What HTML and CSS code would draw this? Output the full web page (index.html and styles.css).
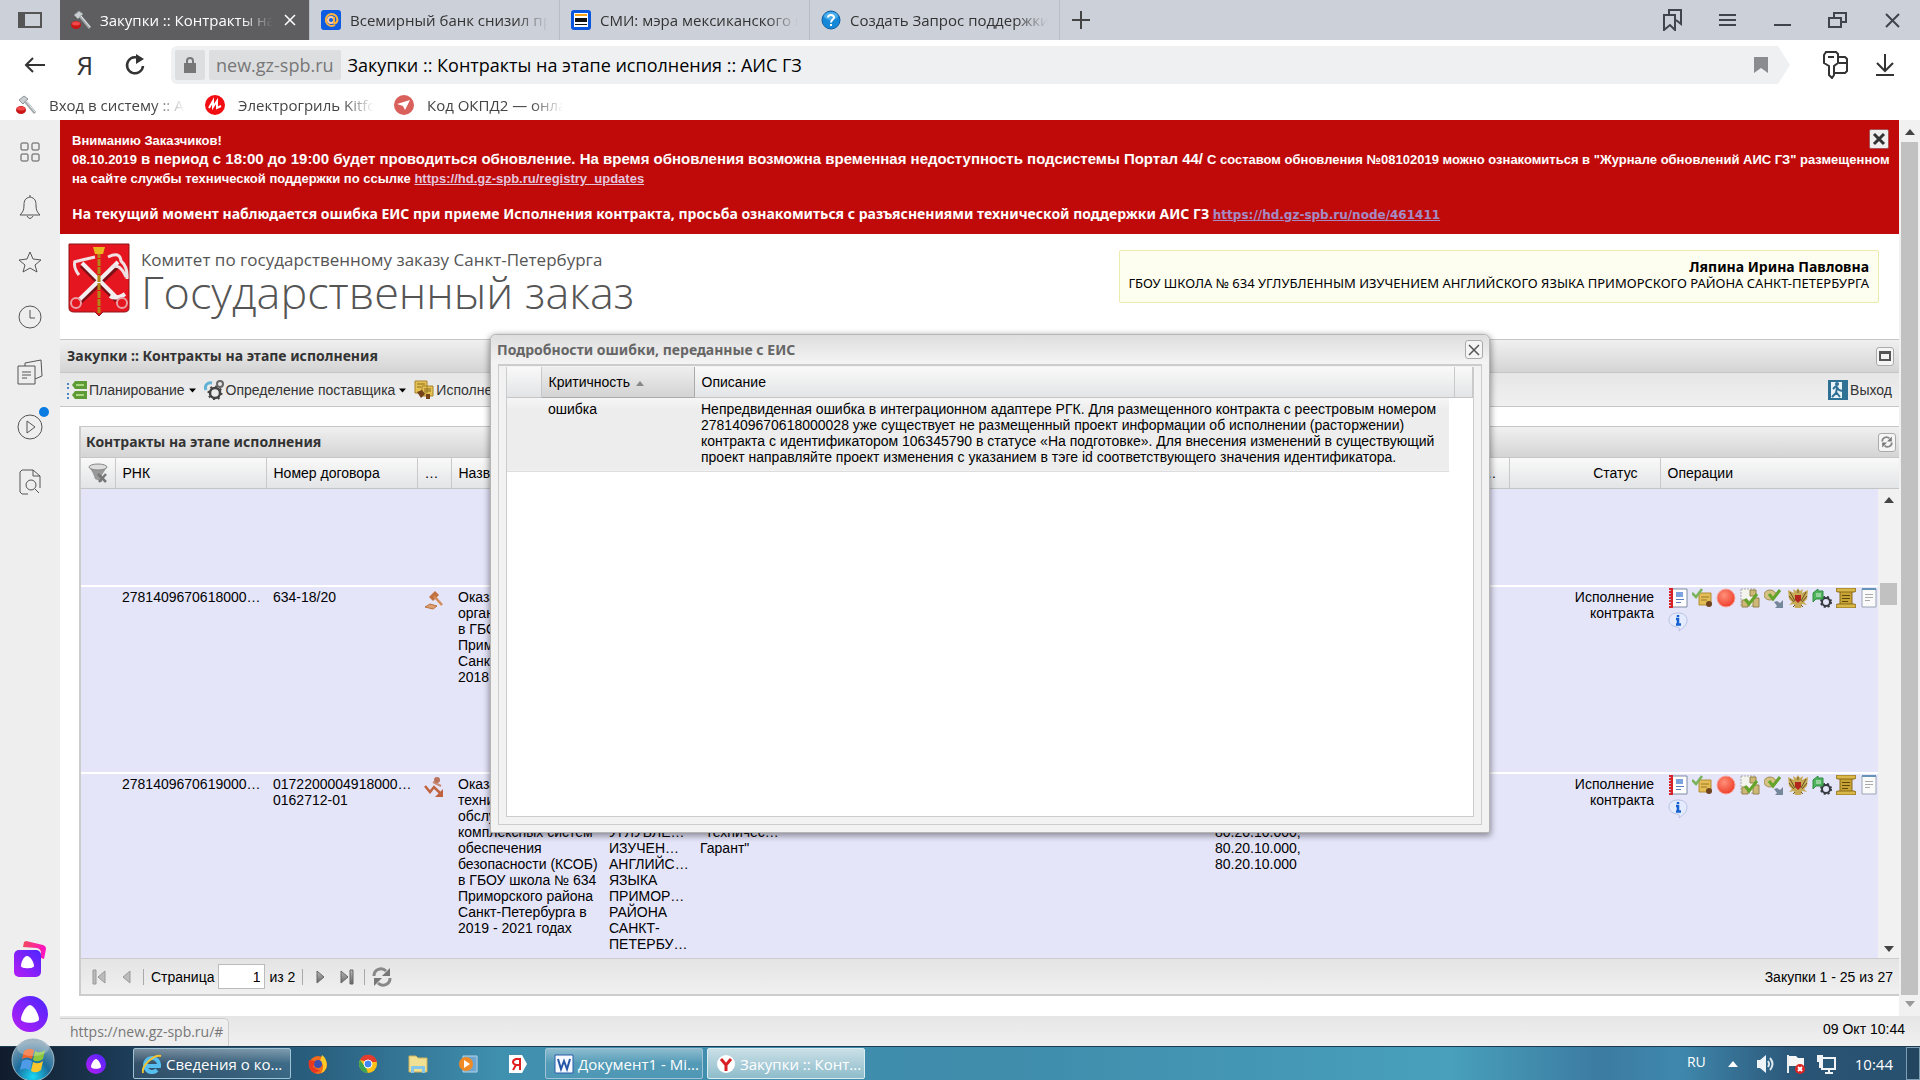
FILE: index.html
```html
<!DOCTYPE html>
<html lang="ru">
<head>
<meta charset="utf-8">
<title>Закупки :: Контракты на этапе исполнения :: АИС ГЗ</title>
<link rel="stylesheet" href="styles.css">
</head>
<body>
<svg class="defs" width="0" height="0" aria-hidden="true">
  <defs>
    <linearGradient id="violet" x1="1" y1="0" x2="0" y2="1"><stop offset="0" stop-color="#4a26ff"/><stop offset="1" stop-color="#b81df5"/></linearGradient>
    <linearGradient id="pink" x1="0" y1="0" x2="1" y2="0"><stop offset="0" stop-color="#f4485c"/><stop offset="1" stop-color="#ff10c8"/></linearGradient>
    <radialGradient id="orb" cx=".5" cy=".9" r=".9"><stop offset="0" stop-color="#19d8f5"/><stop offset=".45" stop-color="#1a6c9c"/><stop offset="1" stop-color="#8fa5b4"/></radialGradient>
    <radialGradient id="redball" cx=".4" cy=".35" r=".7"><stop offset="0" stop-color="#ff9078"/><stop offset="1" stop-color="#ee3a28"/></radialGradient>
    <linearGradient id="greyfade" x1="0" y1="0" x2="0" y2="1"><stop offset="0" stop-color="#bbb"/><stop offset="1" stop-color="#666"/></linearGradient>
  </defs>
  <symbol id="i-gavel" viewBox="0 0 20 20"><path d="M3 5 8 1l4 3-5 5z" fill="#c9ced2" stroke="#8e9396"/><path d="m9 6 10 12" stroke="#a3a8ab" stroke-width="3"/><path d="m10 6 9 11" stroke="#e8ebec"/><ellipse cx="5" cy="15" rx="5" ry="4" fill="#c91515"/><ellipse cx="5" cy="13.500" rx="4" ry="2" fill="#f14848"/></symbol>
  <symbol id="i-mail" viewBox="0 0 20 20"><rect width="20" height="20" rx="3" fill="#0c5be0"/><circle cx="10" cy="10" r="3" fill="none" stroke="#fca" stroke-width="2"/><path d="M13 7v5q0 2 2 1c3-3 1-9-5-9a6 6 0 1 0 4 11" fill="none" stroke="#fbb33c" stroke-width="2"/></symbol>
  <symbol id="i-news" viewBox="0 0 20 20"><rect width="20" height="20" rx="3" fill="#0a55dd"/><path fill="#fff" d="M3 3h14v14H3z"/><path fill="#f6a41c" d="M4 4h12v2H4z"/><path fill="#111" d="M4 8h12v4H4zM4 14h12v1H4z"/></symbol>
  <symbol id="i-help" viewBox="0 0 20 20"><circle cx="10" cy="10" r="9" fill="#1588d8" stroke="#0d5fa8"/><ellipse cx="10" cy="6" rx="7" ry="4" fill="#6dc6f5" opacity=".6"/><path d="M7 7.500c0-3.500 6-3.500 6 0 0 2-3 2-3 5M10 14v2" fill="none" stroke="#fff" stroke-width="2"/></symbol>
  <symbol id="i-close" viewBox="0 0 16 16"><path d="m3 3 10 10M13 3 3 13" stroke="currentColor" stroke-width="1.500" fill="none"/></symbol>
  <symbol id="i-closebold" viewBox="0 0 16 16"><path d="m3 3 10 10m0-10L3 13" stroke="currentColor" stroke-width="3" fill="none"/></symbol>
  <symbol id="i-alice" viewBox="0 0 36 36"><circle cx="18" cy="18" r="18" fill="url(#violet)"/><path d="M18 9c4 0 9 10 9 14 0 5-18 5-18 0 0-4 5-14 9-14z" fill="#fff"/></symbol>
  <symbol id="i-bullets" viewBox="0 0 20 20"><path fill="#4d87c7" d="M0 3h2v2H0zM0 7h2v2H0zM0 13h2v2H0zM0 17h2v2H0z"/><path fill="#5c9b35" d="M8 1h12v8H8L5 5zM8 11h12v8H8l-3-4z"/><path fill="#a9d67f" d="M9 4h8v2H9zM9 14h8v2H9z"/></symbol>
  <symbol id="i-gears" viewBox="0 0 20 20"><path d="M2 10C0 5 4 2 8 3" fill="none" stroke="#62b2d6" stroke-width="3"/><circle cx="11" cy="13" r="5" fill="none" stroke="#444" stroke-width="2.500"/><circle cx="11" cy="13" r="6.500" fill="none" stroke="#444" stroke-width="2" stroke-dasharray="2 3"/><circle cx="16" cy="4" r="3" fill="none" stroke="#666" stroke-width="2"/></symbol>
  <symbol id="i-cert" viewBox="0 0 20 20"><path fill="#e4c254" stroke="#a8842a" d="M1 1h12v12H1zM8 6h11v10H8z"/><path d="M3 4h8M3 7h4M10 9h7M10 11h7" stroke="#8d6a1c"/><path fill="#74431b" d="m3 12 5-2 3 4-4 4zM12 14h4v5h-4z"/></symbol>
  <symbol id="i-exit" viewBox="0 0 20 20"><path fill="#2f7095" d="M0 0h20v20H0z"/><path fill="#e9f3f8" d="M3 2h11v16H3z"/><path d="M8 6l-3 3M8 6l3 4 3 1M9 8l-1 5-4 4M8 12l4 5" fill="none" stroke="#2f7095" stroke-width="2"/><circle cx="9" cy="4" r="2" fill="#2f7095"/></symbol>
  <symbol id="i-funnel" viewBox="0 0 20 20"><path fill="#999" d="M1 4c2 3 4 6 5 9l1 3 7 3V12l5-8z"/><ellipse cx="10" cy="4" rx="9" ry="3" fill="#ddd" stroke="#888"/><path d="m10 11 8 8m0-8-7 8" stroke="#777" stroke-width="2.500"/></symbol>
  <symbol id="i-hammer" viewBox="0 0 20 20"><path fill="#c2703f" d="m5 7 6-6 4 4-6 6z"/><path d="m10 6 8 9" stroke="#d18a55" stroke-width="2.500"/><path fill="#dfa071" stroke="#b87040" d="m1 17 5-3 7 2-4 3z"/></symbol>
  <symbol id="i-drop" viewBox="0 0 20 20"><path d="m1 9 5 6 4-5 7 7" fill="none" stroke="#c0623d" stroke-width="2.500"/><path fill="#c0623d" d="M19 12v8h-8z"/><path d="m9 5 8 4" stroke="#c98a73" stroke-width="2"/><circle cx="13" cy="3" r="3" fill="#b9735c"/></symbol>
  <symbol id="i-book" viewBox="0 0 20 20"><path fill="#fff" stroke="#7c8ba0" d="M3 1h16v18H3z"/><path stroke="#d8232a" stroke-width="4" stroke-dasharray="2 1" d="M3 0v20"/><path fill="#d8232a" d="M3 0h2v20H3z"/><path fill="#7aa3e0" d="M8 4h7v5H8z"/><path stroke="#5a7fc0" d="M8 11.500h8M8 14.500h5"/></symbol>
  <symbol id="i-okcert" viewBox="0 0 20 20"><path fill="#e3bd55" stroke="#b18b33" d="M7 5h12v12H7z"/><path stroke="#9c7625" d="M9 9h8M9 12h6"/><path d="m0 5 4 4 6-8" fill="none" stroke="#7bb35b" stroke-width="2.500"/><circle cx="17" cy="16" r="3" fill="#70431f"/></symbol>
  <symbol id="i-stop" viewBox="0 0 20 20"><circle cx="10" cy="10" r="9" fill="url(#redball)" stroke="#f4a79c"/></symbol>
  <symbol id="i-coins" viewBox="0 0 20 20"><path fill="#f4f4ee" stroke="#aaa" stroke-dasharray="2 1" d="M1 1h14v17H1z"/><path fill="#cdb878" stroke="#94814a" d="M10 2h6v6h-6zM2 12h6v7H2zM13 10h6v9h-6z"/><path d="m5 11 4 5 8-10" fill="none" stroke="#65a42c" stroke-width="3"/></symbol>
  <symbol id="i-coinok" viewBox="0 0 20 20"><ellipse cx="6" cy="7" rx="6" ry="5" fill="#d5c181" stroke="#a08d53"/><path d="m5 6 4 5 7-9" fill="none" stroke="#65a42c" stroke-width="3"/><path fill="#75879a" d="M19 12v8h-8l2-2-3-4 3-1 3 2z"/></symbol>
  <symbol id="i-eagle" viewBox="0 0 20 20"><path fill="#c7aa55" d="m10 0 2 3 3-2-1 4 6-3-1 9-3 3 3 3-5-1-1 4h-6l-1-4-5 1 3-3-3-3-1-9 6 3-1-4 3 2z"/><path d="m2 4 5 9M18 4l-5 9M1 8l5 6M19 8l-5 6M10 2v3M7 17l-2 2M13 17l2 2" stroke="#6b5220"/><path fill="#b3261e" d="M7 7h6v5l-3 3-3-3z"/></symbol>
  <symbol id="i-proc" viewBox="0 0 20 20"><circle cx="14" cy="14" r="4" fill="none" stroke="#353b3e" stroke-width="2"/><circle cx="14" cy="14" r="5" fill="none" stroke="#353b3e" stroke-width="2" stroke-dasharray="2 2"/><path fill="#4fb25c" stroke="#2f8c40" d="M1 5 6 1v2h5v8H4l-3 3z"/><path stroke="#d5f2d8" d="M4 6h5M4 8h5"/></symbol>
  <symbol id="i-scroll" viewBox="0 0 20 20"><path fill="#c7a234" stroke="#8a6b16" d="M4 2h12v16H4z"/><rect width="20" height="4" rx="2" fill="#d9b748" stroke="#8a6b16"/><rect y="16" width="20" height="4" rx="2" fill="#d9b748" stroke="#8a6b16"/><path stroke="#5f490b" d="M6 7.500h8M6 10.500h8M6 13.500h6"/></symbol>
  <symbol id="i-page" viewBox="0 0 20 20"><path fill="#fafafa" stroke="#9aa5b4" d="M2 1h14v18H2z"/><path fill="#6492b8" d="M2 0h14v2H2z"/><path stroke="#aaa" d="M5 6.500h8M5 9.500h8M5 12.500h5"/></symbol>
  <symbol id="i-info" viewBox="0 0 20 20"><path fill="#e4ebff" stroke="#b9c3e2" d="M10 1c6 0 9 3 9 7 0 5-3 7-8 11 1-3 0-4-2-4-6-1-8-4-8-7 0-4 3-7 9-7z"/><path d="M10 3v2M8 7h2v5M8 12.500h5" stroke="#1561d1" stroke-width="2.500" fill="none"/></symbol>
  <symbol id="i-refresh" viewBox="0 0 20 20"><path d="M2 9a7 7 0 0 1 12-5M18 11a7 7 0 0 1-12 5" fill="none" stroke="#888" stroke-width="3"/><path fill="#777" d="M18 1v8h-8zM2 19v-8h8z"/></symbol>
  <symbol id="i-up" viewBox="0 0 10 6"><path fill="currentColor" d="M5 0l5 6H0z"/></symbol>
  <symbol id="i-down" viewBox="0 0 10 6"><path fill="currentColor" d="M0 0h10L5 6z"/></symbol>
</svg>

<header class="browser">
  <nav class="tabs" aria-label="Вкладки">
    <button class="tab-panel" aria-label="Панель"><svg width="24" height="16" viewBox="0 0 24 16"><path d="M1 1h22v14H1z" fill="none" stroke="#555" stroke-width="2"/><path fill="#555" d="M1 1h6v14H1z"/></svg></button>
    <button class="tab tab-active"><svg width="20" height="20"><use href="#i-gavel"/></svg><span class="tab-name">Закупки :: Контракты на этапе</span><svg width="16" height="16"><use href="#i-close"/></svg></button>
    <button class="tab"><svg width="20" height="20"><use href="#i-mail"/></svg><span class="tab-name">Всемирный банк снизил прогноз</span></button>
    <button class="tab"><svg width="20" height="20"><use href="#i-news"/></svg><span class="tab-name">СМИ: мэра мексиканского города</span></button>
    <button class="tab"><svg width="20" height="20"><use href="#i-help"/></svg><span class="tab-name">Создать Запрос поддержки</span></button>
    <button class="tab-add" aria-label="Новая вкладка"><svg width="18" height="18" viewBox="0 0 18 18"><path d="M9 0v18M0 9h18" stroke="#444" stroke-width="2"/></svg></button>
    <div class="window-tools">
      <button aria-label="Закладки"><svg width="22" height="22" viewBox="0 0 22 22"><path d="M2 6h11v15l-5-5-6 5zM7 6V1h12v14l-5-4" fill="none" stroke="#40444c" stroke-width="2"/></svg></button>
      <button aria-label="Меню"><svg width="22" height="22" viewBox="0 0 22 22"><path d="M2 6h17M2 11h17M2 16h17" stroke="#40444c" stroke-width="2"/></svg></button>
      <button aria-label="Свернуть"><svg width="22" height="22" viewBox="0 0 22 22"><path d="M2 16h17" stroke="#40444c" stroke-width="2"/></svg></button>
      <button aria-label="Окно"><svg width="22" height="22" viewBox="0 0 22 22"><path d="M2 9h12v9H2zM7 8V4h12v9h-4" fill="none" stroke="#40444c" stroke-width="2"/></svg></button>
      <button aria-label="Закрыть"><svg width="22" height="22" viewBox="0 0 22 22"><path d="m4 5 13 13M17 5 4 18" stroke="#40444c" stroke-width="2"/></svg></button>
    </div>
  </nav>
  <div class="address">
    <button aria-label="Назад"><svg width="22" height="22" viewBox="0 0 22 22"><path d="M21 11H2m7-7-7 7 7 7" fill="none" stroke="#333" stroke-width="2"/></svg></button>
    <button class="ya">Я</button>
    <button aria-label="Обновить"><svg width="22" height="22" viewBox="0 0 22 22"><path d="M17 6a8 8 0 1 0 2 6" fill="none" stroke="#333" stroke-width="2.500"/><path fill="#333" d="M12 0l8 5-8 5z"/></svg></button>
    <div class="field">
      <span class="lock"><svg width="12" height="18" viewBox="0 0 12 18"><path d="M3 9V5a3 3 0 0 1 6 0v4" fill="none" stroke="#777" stroke-width="2"/><path fill="#777" d="M0 7h12v10H0z"/></svg></span>
      <span class="host">new.gz-spb.ru</span>
      <input class="url" type="text" aria-label="Адрес" value="Закупки :: Контракты на этапе исполнения :: АИС ГЗ">
      <svg width="14" height="16" viewBox="0 0 14 16"><path fill="#8b8c90" d="M0 0h14v16l-7-5-7 5z"/></svg>
    </div>
    <button class="keys" aria-label="Пароли"><svg width="28" height="28" viewBox="0 0 28 28"><path d="M5 1h10l2 2v9l-4 3v9l-2 3-3-3v-9l-5-3V4zM7 6h6M18 6h6l2 2v12l-2 2H14M18 12h8" fill="none" stroke="#333" stroke-width="2"/></svg></button>
    <button aria-label="Загрузки"><svg width="20" height="24" viewBox="0 0 20 24"><path d="M10 1v17m-8-8 8 8 8-8M1 22h18" fill="none" stroke="#333" stroke-width="2"/></svg></button>
  </div>
  <nav class="marks" aria-label="Закладки">
    <a href="#"><svg width="20" height="20"><use href="#i-gavel"/></svg><span>Вход в систему :: АИС</span></a>
    <a href="#"><svg width="20" height="20" viewBox="0 0 20 20"><circle cx="10" cy="10" r="10" fill="#f20d12"/><path d="m4 13 4-7v6l4-6v7l4-2" fill="none" stroke="#fff" stroke-width="2"/></svg><span>Электрогриль Kitfort</span></a>
    <a href="#"><svg width="20" height="20" viewBox="0 0 20 20"><circle cx="10" cy="10" r="10" fill="#d9605b"/><path fill="#fff" d="m3 9 13-4-5 10-2-4z"/></svg><span>Код ОКПД2 — онлайн</span></a>
  </nav>
</header>

<div class="middle">
  <aside class="side">
    <button aria-label="Табло"><svg width="20" height="20" viewBox="0 0 20 20"><g fill="none" stroke="#555"><rect x="1" y="1" width="7" height="7" rx="1"/><rect x="12" y="1" width="7" height="7" rx="1"/><rect x="1" y="12" width="7" height="7" rx="1"/><rect x="12" y="12" width="7" height="7" rx="1"/></g></svg></button>
    <button aria-label="Уведомления"><svg width="22" height="26" viewBox="0 0 22 26"><path d="M11 1v2c-5 1-6 4-6 8 0 5-1 7-4 10h20c-3-3-4-5-4-10 0-4-1-7-6-8M8 22q3 5 6 0" fill="none" stroke="#555"/></svg></button>
    <button aria-label="Избранное"><svg width="24" height="22" viewBox="0 0 24 22"><path d="m12 1 3 7 8 1-6 5 2 7-7-4-7 4 2-7-6-5 8-1z" fill="none" stroke="#555"/></svg></button>
    <button aria-label="История"><svg width="24" height="24" viewBox="0 0 24 24"><circle cx="12" cy="12" r="11" fill="none" stroke="#555"/><path d="M12 5v8h5" fill="none" stroke="#555"/></svg></button>
    <button aria-label="Коллекции"><svg width="26" height="26" viewBox="0 0 26 26"><path d="M1 7h17v18H1zM8 7V4l16-3 1 16-7 3M5 13h9M5 16h9M5 19h5" fill="none" stroke="#555"/></svg></button>
    <button class="dotted" aria-label="Видео"><svg width="26" height="26" viewBox="0 0 26 26"><circle cx="13" cy="13" r="12" fill="none" stroke="#555"/><path d="m10 7 8 6-8 6z" fill="none" stroke="#555"/></svg></button>
    <button aria-label="Поиск"><svg width="22" height="26" viewBox="0 0 22 26"><path d="M9 25H3l-2-2V3l2-2h11l7 6v12M14 1v6h7M16 20l4 4" fill="none" stroke="#555"/><circle cx="12" cy="16" r="5" fill="none" stroke="#555"/></svg></button>
    <span class="grow"></span>
    <button aria-label="Коллекция Алисы"><svg width="32" height="36" viewBox="0 0 32 36"><path fill="url(#pink)" d="m12 0 17 4q3 1 3 4l-2 10-3-1V12q0-4-4-5L9 6l1-5z"/><rect x="0" y="9" width="27" height="27" rx="5" fill="url(#violet)"/><path d="M13 15c3 0 7 6 7 10 0 3-13 3-13 0 0-4 3-10 6-10z" fill="#fff"/></svg></button>
    <button aria-label="Алиса"><svg width="36" height="36"><use href="#i-alice"/></svg></button>
  </aside>

  <div class="right">
    <div class="view">
      <main class="page">
        <section class="alert">
          <p><span class="a-small">Вниманию Заказчиков!</span></p>
          <p><span class="a-small">08.10.2019</span> <b class="a-big">в период с 18:00 до 19:00 будет проводиться обновление. На время обновления возможна временная недоступность подсистемы Портал 44/</b> <span class="a-small">С составом обновления №08102019 можно ознакомиться в "Журнале обновлений АИС ГЗ" размещенном</span></p>
          <p><span class="a-small">на сайте службы технической поддержки по ссылке <a href="#">https://hd.gz-spb.ru/registry_updates</a></span></p>
          <p class="a-last">На текущий момент наблюдается ошибка ЕИС при приеме Исполнения контракта, просьба ознакомиться с разъяснениями технической поддержки АИС ГЗ <a class="visited" href="#">https://hd.gz-spb.ru/node/461411</a></p>
          <button class="alert-close" aria-label="Закрыть"><svg width="16" height="16"><use href="#i-closebold"/></svg></button>
        </section>

        <header class="brand">
          <svg width="62" height="74" viewBox="0 0 62 74"><path fill="#e5161f" stroke="#8f1418" d="M1 1h60v64q0 4-5 4H35l-4 4-4-4H6q-5 0-5-4z"/><g stroke="#7a1016" fill="none" stroke-width="6"><path d="m12 58 38-36M14 22l35 35"/></g><g stroke="#f3eef0" fill="none" stroke-width="4"><path d="m11 57 39-38M14 20l34 34M42 53q6 4 15-2" /></g><g stroke="#f0e2e4" fill="none" stroke-width="3"><path d="M11 32q-6-8-4-14M6 19l8-2 13-3M40 14q12-6 13 4 7 6 6 18M44 24q8-4 14 10"/></g><g fill="none" stroke="#e79fa3" stroke-width="2"><circle cx="8" cy="60" r="5"/><circle cx="54" cy="60" r="5"/></g><path d="M31 8v62" stroke="#b48617" stroke-width="3" stroke-dasharray="7 1"/><path fill="#e8b720" d="m25 4 12 0-2 7h-8z"/></svg>
          <div class="brand-text"><span>Комитет по государственному заказу Санкт-Петербурга</span><strong>Государственный заказ</strong></div>
          <div class="user"><b>Ляпина Ирина Павловна</b><span>ГБОУ ШКОЛА № 634 УГЛУБЛЕННЫМ ИЗУЧЕНИЕМ АНГЛИЙСКОГО ЯЗЫКА ПРИМОРСКОГО РАЙОНА САНКТ-ПЕТЕРБУРГА</span></div>
        </header>

        <div class="bar"><h1>Закупки :: Контракты на этапе исполнения</h1><button class="tool" aria-label="Развернуть"><svg width="12" height="10" viewBox="0 0 12 10"><path d="M1 1h10v8H1zM1 2h10" fill="none" stroke="#555" stroke-width="2"/></svg></button></div>
        <nav class="menu">
          <button><svg width="20" height="20"><use href="#i-bullets"/></svg>Планирование<svg class="caret" width="7" height="5"><use href="#i-down"/></svg></button>
          <button><svg width="20" height="20"><use href="#i-gears"/></svg>Определение поставщика<svg class="caret" width="7" height="5"><use href="#i-down"/></svg></button>
          <button><svg width="20" height="20"><use href="#i-cert"/></svg>Исполнение</button>
          <button class="exit"><svg width="20" height="20"><use href="#i-exit"/></svg>Выход</button>
        </nav>

        <section class="panel">
          <div class="bar bar-panel"><h2>Контракты на этапе исполнения</h2><button class="tool" aria-label="Обновить"><svg width="12" height="14"><use href="#i-refresh"/></svg></button></div>
          <table class="grid heads">
            <colgroup><col class="c-ico"><col class="c-std"><col class="c-std"><col class="c-ico"><col class="c-std"><col class="c-org"><col class="c-wide"><col class="c-code"><col class="c-ico"><col class="c-std"><col></colgroup>
            <thead><tr><th class="tight"><svg width="20" height="20"><use href="#i-funnel"/></svg></th><th>РНК</th><th>Номер договора</th><th>…</th><th>Название</th><th></th><th></th><th></th><th>…</th><th class="status">Статус</th><th>Операции</th></tr></thead>
          </table>
          <div class="scroll">
            <table class="grid rows">
              <colgroup><col class="c-ico"><col class="c-std"><col class="c-std"><col class="c-ico"><col class="c-std"><col class="c-org"><col class="c-wide"><col class="c-code"><col class="c-ico"><col class="c-std"><col></colgroup>
              <tbody>
                <tr class="short"><td colspan="11"></td></tr>
                <tr><td></td><td>2781409670618000…</td><td>634-18/20</td><td class="tight"><svg width="20" height="20"><use href="#i-hammer"/></svg></td><td>Оказание<br>организации<br>в ГБОУ<br>Приморского<br>Санкт-<br>2018</td><td></td><td></td><td></td><td></td><td class="status">Исполнение<br>контракта</td><td class="ops"><svg><use href="#i-book"/></svg><svg><use href="#i-okcert"/></svg><svg><use href="#i-stop"/></svg><svg><use href="#i-coins"/></svg><svg><use href="#i-coinok"/></svg><svg><use href="#i-eagle"/></svg><svg><use href="#i-proc"/></svg><svg><use href="#i-scroll"/></svg><svg><use href="#i-page"/></svg><br><svg><use href="#i-info"/></svg></td></tr>
                <tr><td></td><td>2781409670619000…</td><td>0172200004918000…<br>0162712-01</td><td class="tight"><svg width="20" height="20"><use href="#i-drop"/></svg></td><td>Оказание<br>техническому<br>обслуживанию<br>комплексных систем<br>обеспечения<br>безопасности (КСОБ)<br>в ГБОУ школа № 634<br>Приморского района<br>Санкт-Петербурга в<br>2019 - 2021 годах</td><td>ГБОУ<br>ШКОЛА №<br>634<br>УГЛУБЛЕ…<br>ИЗУЧЕН…<br>АНГЛИЙС…<br>ЯЗЫКА<br>ПРИМОР…<br>РАЙОНА<br>САНКТ-<br>ПЕТЕРБУ…</td><td><br><br><br>"Техничес…<br>Гарант"</td><td><br><br><br>80.20.10.000,<br>80.20.10.000,<br>80.20.10.000</td><td></td><td class="status">Исполнение<br>контракта</td><td class="ops"><svg><use href="#i-book"/></svg><svg><use href="#i-okcert"/></svg><svg><use href="#i-stop"/></svg><svg><use href="#i-coins"/></svg><svg><use href="#i-coinok"/></svg><svg><use href="#i-eagle"/></svg><svg><use href="#i-proc"/></svg><svg><use href="#i-scroll"/></svg><svg><use href="#i-page"/></svg><br><svg><use href="#i-info"/></svg></td></tr>
              </tbody>
            </table>
            <div class="track track-grid"><svg width="10" height="6"><use href="#i-up"/></svg><span class="thumb"></span><svg width="10" height="6"><use href="#i-down"/></svg></div>
          </div>
          <footer class="pager">
            <button aria-label="Первая"><svg width="14" height="16" viewBox="0 0 14 16"><path fill="#bbb" stroke="#999" d="M1 1h3v14H1zM13 2v12L6 8z"/></svg></button>
            <button aria-label="Предыдущая"><svg width="14" height="16" viewBox="0 0 14 16"><path fill="#bbb" stroke="#999" d="M11 2v12L4 8z"/></svg></button>
            <i class="sep"></i>
            <label for="pg">Страница</label><input id="pg" type="text" value="1"><span>из 2</span>
            <i class="sep"></i>
            <button aria-label="Следующая"><svg width="14" height="16" viewBox="0 0 14 16"><path fill="url(#greyfade)" stroke="#666" d="M4 2v12l7-6z"/></svg></button>
            <button aria-label="Последняя"><svg width="14" height="16" viewBox="0 0 14 16"><path fill="url(#greyfade)" stroke="#666" d="M10 1h3v14h-3zM1 2v12l7-6z"/></svg></button>
            <i class="sep"></i>
            <button aria-label="Обновить"><svg width="20" height="20"><use href="#i-refresh"/></svg></button>
            <span class="total">Закупки 1 - 25 из 27</span>
          </footer>
        </section>
      </main>
      <div class="track track-page"><svg width="10" height="6"><use href="#i-up"/></svg><span class="thumb"></span><svg class="pale" width="10" height="6"><use href="#i-down"/></svg></div>
    </div>
    <div class="statusbar"><span class="link-hint">https://new.gz-spb.ru/#</span><time>09 Окт 10:44</time></div>
  </div>
</div>

<section class="dialog" role="dialog" aria-labelledby="dlg">
  <div class="dialog-head"><h2 id="dlg">Подробности ошибки, переданные с ЕИС</h2><button class="tool" aria-label="Закрыть"><svg width="16" height="16"><use href="#i-close"/></svg></button></div>
  <div class="dialog-frame">
    <div class="dialog-body">
      <table class="errors">
        <colgroup><col class="e-num"><col class="e-crit"><col><col class="e-gap"><col class="e-end"></colgroup>
        <thead><tr><th></th><th class="sorted">Критичность <svg width="8" height="5"><use href="#i-up"/></svg></th><th colspan="2">Описание</th><th></th></tr></thead>
        <tbody><tr><td></td><td>ошибка</td><td>Непредвиденная ошибка в интеграционном адаптере РГК. Для размещенного контракта с реестровым номером<br>2781409670618000028 уже существует не размещенный проект информации об исполнении (расторжении)<br>контракта с идентификатором 106345790 в статусе «На подготовке». Для внесения изменений в существующий<br>проект направляйте проект изменения с указанием в тэге id соответствующего значения идентификатора.</td></tr></tbody>
      </table>
    </div>
  </div>
</section>

<footer class="taskbar">
  <button class="start" aria-label="Пуск"><svg width="44" height="44" viewBox="0 0 44 44"><circle cx="22" cy="22" r="21" fill="url(#orb)" stroke="#9fb9c7"/><path fill="#f0652a" d="M13 13q5-4 10-1l-2 9q-5-3-10 0z"/><path fill="#8cc63e" d="M24 13q5 3 10-1l-2 9q-5 4-10 1z"/><path fill="#4f9be8" d="M11 23q5-3 10 0l-2 9q-5-3-10 0z"/><path fill="#fbc62c" d="M22 24q5 3 10-1l-2 9q-5 4-10 1z"/><ellipse cx="22" cy="10" rx="16" ry="8" fill="#fff" opacity=".25"/></svg></button>
  <button class="pin" aria-label="Алиса"><svg width="20" height="20"><use href="#i-alice"/></svg></button>
  <button class="task"><svg width="20" height="20" viewBox="0 0 20 20"><path d="M17 12H5h12a7 7 0 1 0-2 4" fill="none" stroke="#57bff0" stroke-width="4"/><path d="M1 19C-1 12 12 0 19 2" fill="none" stroke="#f4c430" stroke-width="2"/></svg>Сведения о ко...</button>
  <button class="pin" aria-label="Firefox"><svg width="20" height="20" viewBox="0 0 20 20"><circle cx="10" cy="11" r="9" fill="#f36b1c"/><path fill="#ffca28" d="M14 1c6 4 7 15-1 18 3-5 3-9-1-12z"/><circle cx="10" cy="10" r="4" fill="#3a4fae"/><path fill="#e8381f" d="M1 6l6 1-2 6 7 4-6 2c-5-3-6-8-5-13z"/></svg></button>
  <button class="pin" aria-label="Chrome"><svg width="20" height="20" viewBox="0 0 20 20"><circle cx="10" cy="10" r="9" fill="#fbc116"/><path fill="#e33b2e" d="M2 6a9 9 0 0 1 17 2h-9z"/><path fill="#37a552" d="M2 6l6 8 2 5A9 9 0 0 1 2 6z"/><circle cx="10" cy="10" r="4" fill="#4285f4" stroke="#fff"/></svg></button>
  <button class="pin" aria-label="Проводник"><svg width="20" height="20" viewBox="0 0 20 20"><path fill="#f1df92" stroke="#cdb35b" d="M1 2h7l2 2h9v14H1z"/><path fill="#84c7e8" d="M3 12h14v7h-3v-4H6v4H3z"/></svg></button>
  <button class="pin" aria-label="Проигрыватель"><svg width="20" height="20" viewBox="0 0 20 20"><path fill="#6fa6cf" stroke="#b7d5e8" d="M5 2h14v16H5z"/><circle cx="8" cy="10" r="7" fill="#f08a24"/><path fill="#fff" d="m6 6 6 4-6 4z"/></svg></button>
  <button class="pin" aria-label="Яндекс"><svg width="20" height="20" viewBox="0 0 20 20"><path fill="#fff" d="M1 1h13l5 9-5 9H1z"/><path d="M12 4v12M12 5H8q-3 1-3 3t3 3h4M8 11l-3 5" fill="none" stroke="#e02020" stroke-width="2"/></svg></button>
  <button class="task"><svg width="20" height="20" viewBox="0 0 20 20"><path fill="#f6f9ff" stroke="#2a5caa" d="M1 1h18v18H1z"/><path d="m4 5 3 10 3-8 3 8 3-10" fill="none" stroke="#2457a5" stroke-width="2"/></svg>Документ1 - Mi...</button>
  <button class="task task-on"><svg width="20" height="20" viewBox="0 0 20 20"><circle cx="10" cy="10" r="9" fill="#fff"/><path d="m5 5 5 6 5-6M10 10v7" fill="none" stroke="#d81f26" stroke-width="3"/></svg>Закупки :: Конт...</button>
  <div class="tray">
    <span class="lang">RU</span>
    <svg class="tray-up" width="10" height="6"><use href="#i-up"/></svg>
    <svg width="20" height="20" viewBox="0 0 20 20"><path fill="#eef4f7" d="M1 6h3l6-5v18l-6-5H1z"/><path d="M12 7q2 3 0 6M14 4q5 6 0 12" fill="none" stroke="#dbe8ee" stroke-width="2"/></svg>
    <svg width="20" height="20" viewBox="0 0 20 20"><path d="M2 1v18" stroke="#eee" stroke-width="2"/><path fill="#f5f5f5" d="M3 2h7l2 2h6v8H3z"/><circle cx="14" cy="15" r="5" fill="#d22"/><path d="m12 13 4 4m0-4-4 4" stroke="#fff" stroke-width="2"/></svg>
    <svg width="20" height="20" viewBox="0 0 20 20"><path d="M6 4h13v11H6zM9 19h8M13 15v4" fill="#2a5878" stroke="#f0f4f6" stroke-width="2"/><path fill="#f0f4f6" d="M1 1h6v7H5v6H3V8H1z"/></svg>
    <time>10:44</time>
  </div>
  <button class="desk" aria-label="Свернуть все окна"></button>
</footer>
</body>
</html>
```
FILE: styles.css
```css
* { box-sizing: border-box; }
html, body { height: 100%; }
body {
  margin: 0;
  display: flex;
  flex-direction: column;
  overflow: hidden;
  background: #fff;
  color: #000;
  font: 14px/16px "Liberation Sans", Arial, sans-serif;
}
.defs { position: absolute; }
svg { flex: none; display: block; }
button {
  margin: 0;
  padding: 0;
  border: 0;
  background: none;
  color: inherit;
  font: inherit;
  display: flex;
  align-items: center;
  justify-content: center;
}
h1, h2, p { margin: 0; font-size: inherit; }

/* browser chrome */
.browser { flex: none; font-family: "Open Sans", "Noto Sans", sans-serif; }
.tabs { display: flex; height: 40px; background: #ccd0d8; }
.tab-panel { width: 60px; }
.tab {
  width: 250px;
  padding: 0 12px 0 11px;
  gap: 9px;
  color: #333;
  font-size: 15px;
  line-height: 22px;
  box-shadow: inset -1px 0 #b9bdc5;
}
.tab-active { background: #5e5e60; color: #fff; }
.tab-name {
  flex: 1;
  text-align: left;
  white-space: nowrap;
  overflow: hidden;
  -webkit-mask-image: linear-gradient(to left, transparent, #000 32px);
  mask-image: linear-gradient(to left, transparent, #000 32px);
}
.tab-add { width: 42px; }
.window-tools { display: flex; margin-left: auto; }
.window-tools button { width: 55px; }
.address { display: flex; align-items: center; height: 50px; padding: 0 10px; }
.address > button { width: 50px; }
.ya { font-size: 26px; color: #333; }
.field {
  flex: 1;
  display: flex;
  align-items: center;
  gap: 4px;
  height: 38px;
  margin: 0 20px 0 11px;
  padding: 0 22px 0 4px;
  background: #eff0f2;
  border-radius: 6px 0 0 6px;
  clip-path: polygon(0 0, calc(100% - 12px) 0, 100% 50%, calc(100% - 12px) 100%, 0 100%);
}
.lock, .host { display: flex; align-items: center; height: 30px; background: #dddee0; border-radius: 2px; }
.lock { width: 30px; justify-content: center; }
.host { padding: 0 7px; font-size: 18px; color: #777; }
.url { flex: 1; border: 0; padding: 0 3px; background: none; font: 18px/24px "Open Sans", "Noto Sans", sans-serif; color: #000; }
.marks { display: flex; gap: 20px; height: 30px; padding: 0 16px; }
.marks a { display: flex; align-items: center; gap: 13px; color: #444; text-decoration: none; font-size: 15px; line-height: 30px; }
.marks span {
  width: 136px;
  white-space: nowrap;
  overflow: hidden;
  -webkit-mask-image: linear-gradient(to left, transparent, #000 32px);
  mask-image: linear-gradient(to left, transparent, #000 32px);
}

/* frame round the page */
.middle { flex: 1; min-height: 0; display: flex; }
.side { flex: none; width: 60px; display: flex; flex-direction: column; padding: 4px 0 5px; background: #eee; }
.side button { height: 55px; position: relative; }
.dotted::after { content: ""; position: absolute; right: 11px; top: 8px; width: 10px; height: 10px; border-radius: 50%; background: #0a7be0; }
.grow { flex: 1; }
.right { flex: 1; min-width: 0; display: flex; flex-direction: column; }
.view { flex: 1; min-height: 0; display: flex; }
.page { flex: 1; min-width: 0; display: flex; flex-direction: column; }
.track { flex: none; width: 21px; padding: 9px 2px; display: flex; flex-direction: column; align-items: center; background: #f1f1f1; color: #444; }
.thumb { width: 17px; background: #c1c1c1; }
.track-page .thumb { flex: 1; margin: 7px 0 6px; }
.track-grid { padding: 8px 2px 6px; }
.track-grid .thumb { height: 22px; margin: 80px 0 auto; }
.pale { color: #999; }
.statusbar { flex: none; height: 30px; display: flex; justify-content: space-between; padding-right: 15px; background: linear-gradient(#e6e6e6, #f0f0f0); line-height: 26px; }
.link-hint { height: 28px; margin-top: 2px; padding: 0 5px 0 10px; border: 1px solid #ccc; border-width: 1px 1px 0 0; border-radius: 0 5px 0 0; background: #eee; color: #777; font-family: "Open Sans", "Noto Sans", sans-serif; }

/* notice */
.alert { position: relative; flex: none; height: 114px; padding: 11px 12px; background: #c00a0a; color: #fff; white-space: nowrap; font-weight: bold; line-height: 18px; overflow: hidden; }
.a-small { font-size: 13px; }
.a-big { font-size: 15px; }
.alert a { color: #e5c5dc; }
.alert .visited { color: #a58ac4; font: bold 12px/18px "DejaVu Sans", sans-serif; }
.a-last { margin-top: 17px; font: bold 14px/18px "Noto Sans", sans-serif; }
.alert-close { position: absolute; right: 10px; top: 9px; width: 20px; height: 20px; background: #eee; border: 1px solid #a55; border-radius: 2px; color: #333; }

/* brand */
.brand { flex: none; display: flex; align-items: flex-start; height: 105px; padding: 9px 20px 0 8px; gap: 11px; }
.brand-text { display: flex; flex-direction: column; color: #555; white-space: nowrap; font-family: "Open Sans", sans-serif; }
.brand-text span { font-size: 17px; line-height: 34px; }
.brand-text strong { font: 300 45px/30px "Open Sans", sans-serif; }
.user { margin: 7px 0 0 auto; height: 53px; padding: 7px 9px; display: flex; flex-direction: column; text-align: right; background: #fdfdf0; border: 1px solid #ecebae; border-radius: 2px; font: 13px/17px "Noto Sans", sans-serif; white-space: nowrap; }
.user b { font-size: 14px; }

/* bars and toolbar */
.bar { flex: none; display: flex; align-items: center; justify-content: space-between; height: 34px; padding: 0 5px 0 7px; border-top: 1px solid #c6c6c6; border-bottom: 1px solid #c6c6c6; background: linear-gradient(#f0f0f0, #d4d4d4); color: #333; font: bold 14px/18px "Noto Sans", sans-serif; }
.bar-panel { height: 32px; padding: 0 3px 0 5px; }
.tool { width: 18px; height: 19px; background: #f5f5f5; border: 1px solid #aaa; border-radius: 3px; color: #555; }
.menu { flex: none; display: flex; height: 34px; padding: 0 7px; gap: 8px; background: linear-gradient(#e6e6e6, #f0f0f0); border-bottom: 1px solid #c6c6c6; color: #333; }
.menu button { gap: 2px; }
.caret { margin: 2px 0 0 2px; color: #000; }
.exit { margin-left: auto; }

/* contract grid */
.panel { flex: 1; min-height: 0; display: flex; flex-direction: column; margin: 19px 0 20px 19px; border: 2px solid #ccc; border-width: 0 0 2px 2px; }
.grid { width: 100%; table-layout: fixed; border-collapse: collapse; text-align: left; white-space: nowrap; }
.c-ico { width: 34px; }
.c-std { width: 151px; }
.c-org { width: 91px; }
.c-wide { width: 515px; }
.c-code { width: 267px; }
th { height: 30px; padding: 0 7px; background: linear-gradient(#f9f9f9, #e3e4e6); border-right: 1px solid #c9c9c9; border-bottom: 1px solid #c5c5c5; font-weight: normal; text-align: left; }
.heads th:last-child { border-right: 0; }
.scroll { flex: 1; min-height: 0; display: flex; overflow: hidden; border-bottom: 1px solid #ccc; }
.rows { flex: 1; width: 0; height: 470px; background: #e5e5fa; }
.rows td { height: 187px; padding: 2px 7px; vertical-align: top; border-bottom: 2px solid #fff; overflow: hidden; }
.rows .short td { height: 97px; }
.rows .tight, .heads .tight { padding: 3px 7px; }
.grid .status { text-align: right; padding-right: 6px; }
.heads .status { padding-right: 22px; }
.rows .ops { padding: 1px 0 0 8px; line-height: 0; }
.ops svg { display: inline-block; width: 20px; height: 20px; margin: 0 4px 4px 0; }
.pager { flex: none; display: flex; align-items: center; gap: 7px; height: 35px; padding: 0 6px 0 8px; background: linear-gradient(#e4e4e4, #f0f0f0); }
.pager button { width: 20px; }
.pager input { width: 47px; height: 25px; margin: 0 -3px; padding: 0 4px; border: 1px solid #bbb; font: inherit; text-align: right; }
.sep { width: 1px; height: 16px; background: #aaa; }
.total { margin-left: auto; }

/* error window */
.dialog { position: absolute; left: 490px; top: 334px; width: 1000px; height: 499px; display: flex; flex-direction: column; padding: 0 7px; background: #f2f2f2; border: 1px solid #b5b5b5; border-radius: 6px 6px 2px 2px; box-shadow: 0 2px 6px 1px rgba(0, 0, 0, .4); }
.dialog-head { display: flex; align-items: center; justify-content: space-between; height: 29px; margin: 0 -7px; padding: 0 6px; background: linear-gradient(#dedede, #f4f4f4); border-radius: 6px 6px 0 0; color: #666; font: bold 14px/18px "Noto Sans", sans-serif; }
.dialog-frame { flex: 1; display: flex; padding: 1px 7px 7px; margin-bottom: 7px; border: 1px solid #ccc; border-top-width: 2px; }
.dialog-body { flex: 1; background: #fff; border: 1px solid #ccc; border-top: 0; }
.errors { width: 100%; table-layout: fixed; border-collapse: collapse; white-space: nowrap; }
.errors .sorted { background: linear-gradient(#eee, #d3d3d3); border: 1px solid #aaa; border-width: 0 1px 1px; }
.sorted svg { display: inline-block; margin: 0 0 1px 2px; color: #888; }
.errors td { height: 74px; padding: 3px 7px; vertical-align: top; background: linear-gradient(#f6f6f6, #ededed 12px); border-bottom: 1px solid #ddd; }
.e-num { width: 34px; }
.e-crit { width: 153px; }
.e-gap { width: 5px; }
.e-end { width: 18px; }

/* taskbar */
.taskbar { flex: none; position: relative; display: flex; height: 34px; padding-left: 11px; border-top: 1px solid #1d3a50; background: linear-gradient(90deg, #101c2c, #1c3b56 120px, #2a6080 320px, #4090b0 500px, #3f8cab 1000px, #48a0bc 1450px, #3c7ba2 1600px, #3f88ad 1680px, #2a5475 1800px, #28506e); color: #fff; font: 15px/20px "Open Sans", "Noto Sans", sans-serif; }
.start { width: 44px; height: 44px; margin: -9px 16px 0 0; }
.pin { width: 50px; }
.start + .pin { margin-right: 10px; }
.task { width: 158px; margin: 1px 2px; padding: 0 8px; gap: 4px; justify-content: flex-start; white-space: nowrap; border: 1px solid #9ec3d4; border-radius: 2px; background: linear-gradient(rgba(255, 255, 255, .4), rgba(255, 255, 255, .1) 50%, rgba(255, 255, 255, .08)); }
.task-on { background: linear-gradient(#c9dfe6, #8ebccb); border-color: #d8ecf2; }
.tray { display: flex; align-items: center; gap: 10px; margin-left: auto; padding-right: 13px; }
.lang { margin: -4px 12px 0 0; font-size: 14px; }
.tray-up { margin-right: 8px; }
.tray time { margin-left: 9px; }
.desk { width: 14px; border: 1px solid #7fa0b4; background: #24455f; }
```
